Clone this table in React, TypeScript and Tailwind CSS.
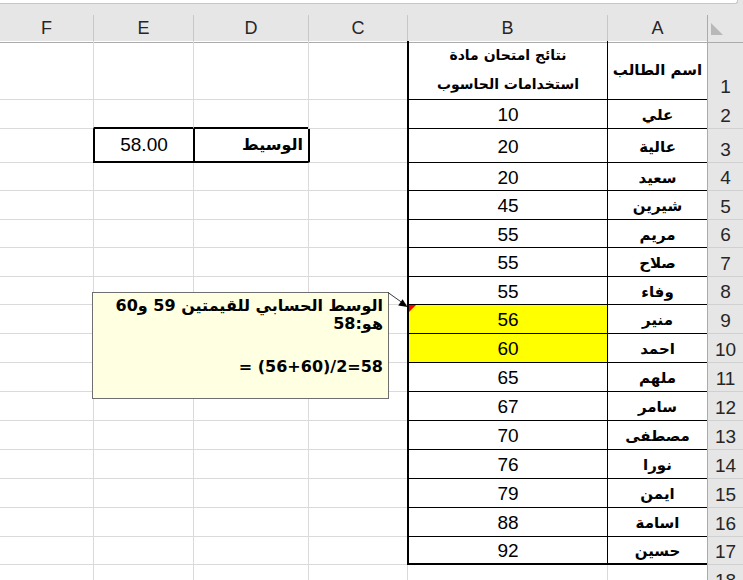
import React from 'react';

const GRID = 'grid grid-cols-[36px_100px_200px_99px_115px_100px_93px]';
const SANS = "font-['Liberation_Sans','DejaVu_Sans',sans-serif]";
const ARABIC = "font-['DejaVu_Sans',sans-serif]";

const GRIDLINE = 'border-l border-b border-[#dadada]';
const GRIDLINE_LAST = 'border-b border-[#dadada]';

// name, score, row height
const students: [string, number, string][] = [
  ['علي', 10, 'h-[30px]'],
  ['عالية', 20, 'h-[34px]'],
  ['سعيد', 20, 'h-[28px]'],
  ['شيرين', 45, 'h-[29px]'],
  ['مريم', 55, 'h-[28px]'],
  ['صلاح', 55, 'h-[29px]'],
  ['وفاء', 55, 'h-[28px]'],
  ['منير', 56, 'h-[29px]'],
  ['احمد', 60, 'h-[29px]'],
  ['ملهم', 65, 'h-[29px]'],
  ['سامر', 67, 'h-[29px]'],
  ['مصطفى', 70, 'h-[29px]'],
  ['نورا', 76, 'h-[29px]'],
  ['ايمن', 79, 'h-[29px]'],
  ['اسامة', 88, 'h-[29px]'],
  ['حسين', 92, 'h-[28px]'],
];

const RowHeader = ({ n }: { n: number }) => (
  <div className="flex items-end justify-center bg-[#e6e6e6] border-l border-b border-l-[#ababab] border-b-[#d0d0d0] pb-[3px] text-[19px] leading-[18px] text-[#262626]">
    {n}
  </div>
);

// the cells of columns C..F for one row, with the box around D3:E3
const EmptyCells = ({ n }: { n: number }) => {
  if (n === 2) {
    return (
      <>
        <div className={GRIDLINE} />
        <div className="border-l border-l-[#dadada] border-b-2 border-b-black" />
        <div className="border-l border-l-[#dadada] border-b-2 border-b-black" />
        <div className={GRIDLINE_LAST} />
      </>
    );
  }
  if (n === 3) {
    return (
      <>
        <div className="border-l-2 border-l-black border-b border-b-[#dadada]" />
        <div className={`border-l-2 border-b-2 border-black flex items-center justify-start pr-[5px] font-bold text-[16px] text-black ${ARABIC}`}>
          الوسيط
        </div>
        <div className="border-l-2 border-b-2 border-black flex items-center justify-center text-[19px] text-black">
          <span dir="ltr">58.00</span>
        </div>
        <div className={GRIDLINE_LAST} />
      </>
    );
  }
  return (
    <>
      <div className={GRIDLINE} />
      <div className={GRIDLINE} />
      <div className={GRIDLINE} />
      <div className={GRIDLINE_LAST} />
    </>
  );
};

const Comment = () => (
  <>
    <div
      dir="rtl"
      className={`absolute left-[92px] top-[292px] w-[297px] h-[107px] bg-[#ffffe1] border border-[#6f6f6f] pt-[4px] pr-[5px] font-bold text-[16px] leading-[18px] text-black ${ARABIC}`}
    >
      <div>الوسط الحسابي للقيمتين 59 و60</div>
      <div>هو:58</div>
      <div className="mt-[25px]">
        <span dir="ltr">= (56+60)/2=58</span>
      </div>
    </div>
    <svg className="absolute left-[380px] top-[288px]" width="32" height="24" viewBox="380 288 32 24">
      <line x1="388" y1="292.5" x2="402" y2="302.5" stroke="#3a3a3a" strokeWidth="1" />
      <polygon points="407.5,307 398.2,305.5 402.6,299.3" fill="#000" />
    </svg>
  </>
);

export default function App() {
  return (
    <div className={`relative w-[743px] h-[580px] overflow-hidden bg-white ${SANS}`}>
      {/* formula bar edge */}
      <div className="h-[15px] bg-[#e6e6e6]">
        <div className="mr-[5px] h-[4px] bg-white border-b border-r border-[#c6c6c6] rounded-br-[3px]" />
      </div>

      {/* column headers */}
      <div dir="rtl" className={`${GRID} h-[26px] bg-[#e6e6e6] text-[18px] text-[#262626]`}>
        <div className="relative border-l border-b border-l-[#ababab] border-b-[#ababab]">
          <svg className="absolute left-[3px] top-[8px]" width="12" height="12" viewBox="0 0 12 12">
            <polygon points="0,0 0,12 12,12" fill="#b8b8b8" />
          </svg>
        </div>
        {['A', 'B', 'C', 'D', 'E', 'F'].map((l, i) => (
          <div
            key={l}
            className={`flex items-center justify-center border-b border-b-[#ababab] ${i < 5 ? 'border-l border-l-[#c8c8c8]' : ''}`}
          >
            {l}
          </div>
        ))}
      </div>

      {/* row 1: titles */}
      <div dir="rtl" className={`${GRID} h-[58px]`}>
        <RowHeader n={1} />
        <div className={`flex items-center justify-center border-l border-b border-black font-bold text-[15px] text-black ${ARABIC}`}>
          اسم الطالب
        </div>
        <div className={`flex flex-col items-center justify-center border-l-2 border-l-black border-b border-b-black font-bold text-[14px] leading-[29px] text-black ${ARABIC}`}>
          <div>نتائج امتحان مادة</div>
          <div>استخدامات الحاسوب</div>
        </div>
        <EmptyCells n={1} />
      </div>

      {students.map(([name, score, h], i) => {
        const n = i + 2;
        const last = n === 17;
        const yellow = n === 9 || n === 10;
        return (
          <div key={n} dir="rtl" className={`${GRID} ${h}`}>
            <RowHeader n={n} />
            <div
              className={`flex items-center justify-center pt-[2px] border-l border-black ${last ? 'border-b-2' : 'border-b'} font-bold text-[15px] leading-[22px] text-black ${ARABIC}`}
            >
              {name}
            </div>
            <div
              className={`relative flex items-center justify-center pt-[2px] border-l-2 border-black ${last ? 'border-b-2' : 'border-b'} ${yellow ? 'bg-[#ffff00]' : ''} text-[19px] leading-[18px] text-black`}
            >
              {n === 9 && (
                <svg className="absolute left-0 top-0" width="7" height="7" viewBox="0 0 7 7">
                  <polygon points="0,0 7,0 0,7" fill="#ff0000" />
                </svg>
              )}
              {score}
            </div>
            <EmptyCells n={n} />
          </div>
        );
      })}

      {/* row 18, cut by the window */}
      <div dir="rtl" className={`${GRID} h-[29px]`}>
        <RowHeader n={18} />
        <div className="border-l border-b border-[#dadada]" />
        <div className="border-l border-b border-[#dadada]" />
        <EmptyCells n={18} />
      </div>

      <Comment />
    </div>
  );
}
